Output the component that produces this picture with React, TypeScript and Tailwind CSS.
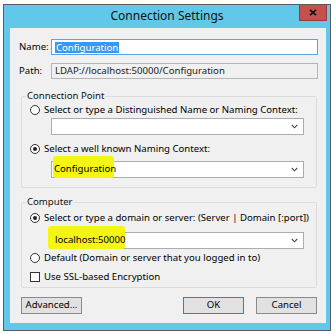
import React from 'react';

const font = "font-['Segoe_UI','Noto_Sans',sans-serif]";

function Chevron() {
  return (
    <svg width="7" height="5" viewBox="0 0 7 5" className="shrink-0">
      <path d="M0.8 1 L3.5 3.8 L6.2 1" fill="none" stroke="#4a4a4a" strokeWidth="1.1" />
    </svg>
  );
}

function Radio({ checked }: { checked?: boolean }) {
  return (
    <span className="w-[10px] h-[10px] rounded-full border border-[#333] bg-white flex items-center justify-center shrink-0">
      {checked && <span className="w-[4px] h-[4px] rounded-full bg-[#222]" />}
    </span>
  );
}

function Combo({ className = '', children }: { className?: string; children?: React.ReactNode }) {
  return (
    <div className={`relative ml-[21px] w-[253px] h-[17px] border border-[#abadb3] bg-white flex items-center pr-[5px] ${className}`}>
      <div className="flex-1 min-w-0 relative h-full flex items-center">{children}</div>
      <Chevron />
    </div>
  );
}

function Button({ label, primary }: { label: string; primary?: boolean }) {
  return (
    <button
      className={`w-[61px] h-[17px] flex items-center justify-center bg-[#e1e1e1] text-[9.6px] text-black border ${
        primary ? 'border-[#3c7fb1]' : 'border-[#8a8a8a]'
      }`}
    >
      {label}
    </button>
  );
}

export default function App() {
  return (
    <div className={`w-[335px] h-[334px] bg-white overflow-hidden ${font}`}>
      <div className="ml-[3px] mt-[4px] w-[328px] h-[327px] border border-[#5b5b5b] bg-[#61c8ea] flex flex-col">
        {/* Title bar */}
        <div className="h-[23px] grid grid-cols-[1fr_auto_1fr] items-start">
          <div />
          <div className="pt-[3px] text-[12px] leading-[16px] text-[#111]">Connection Settings</div>
          <div className="flex justify-end pr-[3px]">
            <div className="w-[28px] h-[16px] bg-[#c7504f] border border-[#9b3a3a] border-t-0 flex items-center justify-center">
              <svg width="8" height="7" viewBox="0 0 8 7">
                <path d="M1 0.8 L7 6.2 M7 0.8 L1 6.2" stroke="#151515" strokeWidth="1.8" />
              </svg>
            </div>
          </div>
        </div>

        {/* Client area */}
        <div className="ml-[6px] mr-[4px] h-[295px] bg-[#f0f0f0] text-[9.6px] text-black pl-[9px] pr-[8px]">
          <div className="mt-[11px] flex items-center h-[16px]">
            <span className="w-[32px]">Name:</span>
            <div className="flex-1 h-[16px] border border-[#5ea2e4] bg-white flex items-center pl-[3px]">
              <span className="bg-[#3399ff] text-white leading-[11px] px-[1px]">Configuration</span>
            </div>
          </div>
          <div className="mt-[8px] flex items-center h-[16px]">
            <span className="w-[32px]">Path:</span>
            <div className="flex-1 h-[16px] border border-[#b5b5b5] bg-[#f0f0f0] flex items-center pl-[3px] text-[#222]">
              LDAP://localhost:50000/Configuration
            </div>
          </div>

          {/* Connection Point */}
          <fieldset className="mt-[11px] ml-[2px] mr-[1px] border border-[#dcdcdc] rounded-[2px] pl-[8px] pb-[9px] pt-[1px]">
            <legend className="ml-[-4px] px-[1px] leading-[12px] text-[#111]">Connection Point</legend>
            <div className="h-[14px] flex items-center gap-[4px]">
              <Radio />
              <span>Select or type a Distinguished Name or Naming Context:</span>
            </div>
            <Combo className="mt-[1px]" />
            <div className="mt-[7px] h-[14px] flex items-center gap-[4px]">
              <Radio checked />
              <span>Select a well known Naming Context:</span>
            </div>
            <Combo className="mt-[5px]">
              <span className="absolute left-[1px] top-[-6px] w-[61px] h-[22px] bg-[#f5f514] rounded-[3px]" />
              <span className="relative pl-[2px]">Configuration</span>
            </Combo>
          </fieldset>

          {/* Computer */}
          <fieldset className="mt-[8px] ml-[2px] mr-[1px] border border-[#dcdcdc] rounded-[2px] pl-[8px] pb-[3px] pt-[3px]">
            <legend className="ml-[-4px] px-[1px] leading-[12px] text-[#111]">Computer</legend>
            <div className="h-[14px] flex items-center gap-[4px]">
              <Radio checked />
              <span>Select or type a domain or server: (Server | Domain [:port])</span>
            </div>
            <Combo className="mt-[7px]">
              <span className="absolute left-[-4px] top-[-7px] w-[77px] h-[23px] bg-[#f5f514] rounded-[3px]" />
              <span className="relative pl-[3px]">localhost:50000</span>
            </Combo>
            <div className="mt-[2px] h-[14px] flex items-center gap-[4px]">
              <Radio />
              <span>Default (Domain or server that you logged in to)</span>
            </div>
            <div className="mt-[5px] h-[14px] flex items-center gap-[4px]">
              <span className="w-[10px] h-[10px] border border-[#333] bg-white shrink-0" />
              <span>Use SSL-based Encryption</span>
            </div>
          </fieldset>

          <div className="mt-[9px] ml-[2px] mr-[1px] flex items-center">
            <Button label="Advanced..." />
            <div className="flex-1" />
            <Button label="OK" primary />
            <div className="w-[12px]" />
            <Button label="Cancel" />
          </div>
        </div>
      </div>
    </div>
  );
}
